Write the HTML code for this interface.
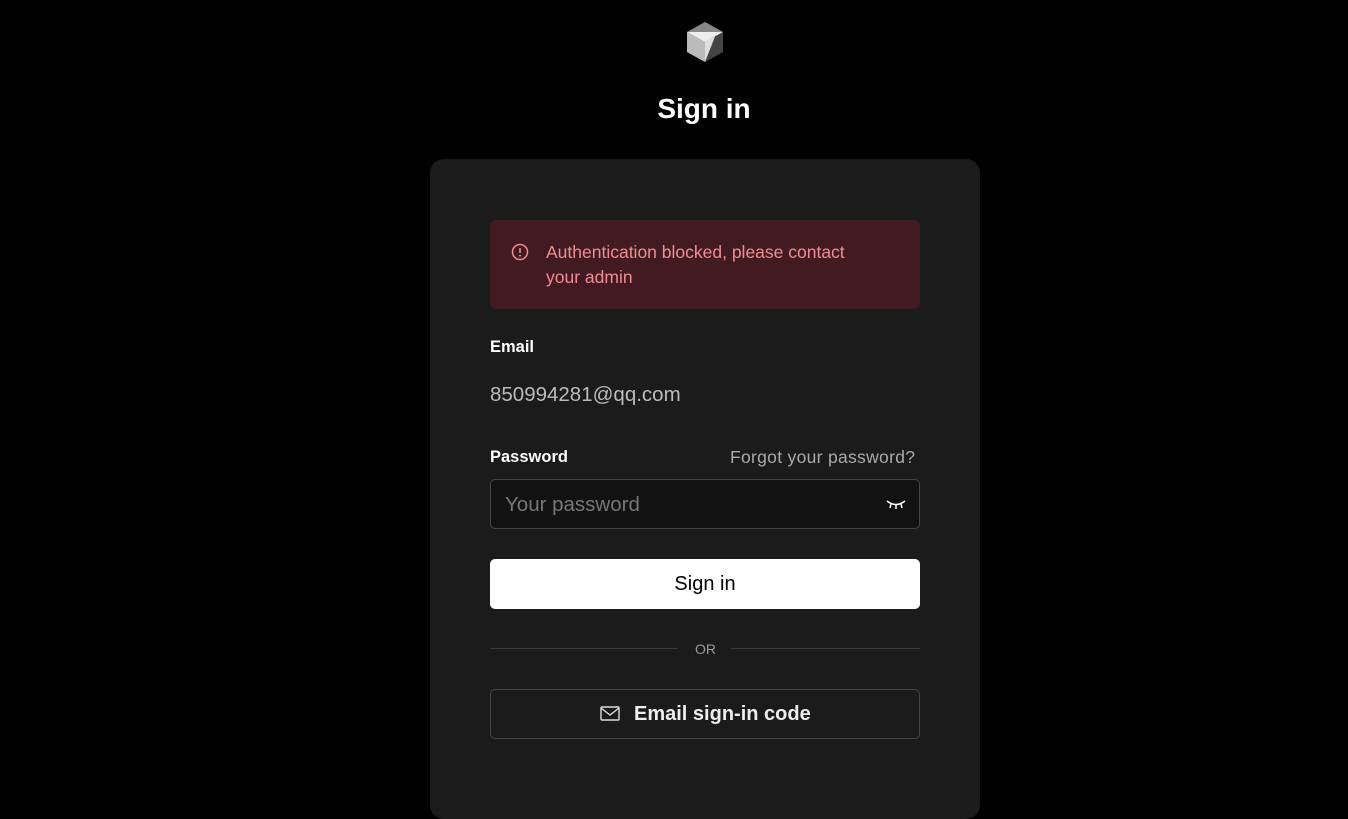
<!DOCTYPE html>
<html><head><meta charset="utf-8"><style>
*{box-sizing:border-box;margin:0;padding:0}
body{width:1348px;height:790px;background:#000;font-family:"Liberation Sans",sans-serif;overflow:hidden;position:relative;color:#fff}
.abs{position:absolute}
</style></head><body>
<svg class="abs" style="left:686px;top:21px" width="38" height="41" viewBox="0 0 38 41">
<polygon points="19,1 37,11 37,31 19,41 1,31 1,11" fill="#555"/>
<polygon points="1,11 37,11 19,21" fill="#eee"/>
<polygon points="19,1 37,11 1,11" fill="#888"/>
<polygon points="1,11 19,21 19,41 1,31" fill="#bbb"/>
<polygon points="19,21 37,11 37,31 19,41" fill="#444"/>
<polygon points="19,21 30,13 19,41" fill="#ddd"/>
</svg>
<div class="abs" style="left:0;width:1408px;top:93px;text-align:center;font-size:28px;font-weight:bold;">Sign in</div>
<div class="abs" style="left:430px;top:159px;width:550px;height:660px;background:#1b1b1b;border-radius:14px"></div>
<div class="abs" style="left:490px;top:220px;width:430px;height:89px;background:#421b22;border-radius:6px"></div>
<svg class="abs" style="left:511px;top:243px" width="18" height="18" viewBox="0 0 18 18"><circle cx="9" cy="9" r="7.5" fill="none" stroke="#f08a8f" stroke-width="1.5"/><line x1="9" y1="5" x2="9" y2="10" stroke="#f08a8f" stroke-width="1.6"/><circle cx="9" cy="12.7" r="1" fill="#f08a8f"/></svg>
<div class="abs" style="left:546px;top:240px;font-size:17.5px;line-height:25px;color:#f28c90;width:335px">Authentication blocked, please contact your admin</div>
<div class="abs" style="left:490px;top:338px;font-size:16.5px;font-weight:bold">Email</div>
<div class="abs" style="left:490px;top:383px;font-size:20.5px;color:#bbb">850994281@qq.com</div>
<div class="abs" style="left:490px;top:448px;font-size:16.5px;font-weight:bold">Password</div>
<div class="abs" style="left:730px;top:447px;font-size:17.5px;color:#aaa;letter-spacing:0.3px">Forgot your password?</div>
<div class="abs" style="left:490px;top:479px;width:430px;height:50px;background:#121212;border:1px solid #444;border-radius:5px"></div>
<div class="abs" style="left:505px;top:493px;font-size:20.5px;color:#777">Your password</div>
<svg class="abs" style="left:885px;top:499px" width="22" height="12" viewBox="0 0 22 12"><path d="M2 2 Q11 9 20 2 M6 5 L5 9 M11 6 L11 10 M16 5 L17 9" stroke="#fff" stroke-width="1.5" fill="none"/></svg>
<div class="abs" style="left:490px;top:559px;width:430px;height:50px;background:#fff;border-radius:5px;color:#000;font-size:20px;text-align:center;line-height:51px">Sign in</div>
<div class="abs" style="left:490px;top:648px;width:188px;height:1px;background:#3a3a3a"></div>
<div class="abs" style="left:731px;top:648px;width:189px;height:1px;background:#3a3a3a"></div>
<div class="abs" style="left:695px;top:641px;font-size:14px;color:#999">OR</div>
<div class="abs" style="left:490px;top:689px;width:430px;height:50px;border:1px solid #444;border-radius:5px;background:#1b1b1b"></div>
<svg class="abs" style="left:600px;top:706px" width="20" height="15" viewBox="0 0 20 15"><rect x="1" y="1" width="18" height="13" rx="1" fill="none" stroke="#ddd" stroke-width="1.4"/><path d="M1 2 L10 9 L19 2" fill="none" stroke="#ddd" stroke-width="1.4"/></svg>
<div class="abs" style="left:634px;top:703px;font-size:20px;font-weight:bold;color:#eee">Email sign-in code</div>
</body></html>
